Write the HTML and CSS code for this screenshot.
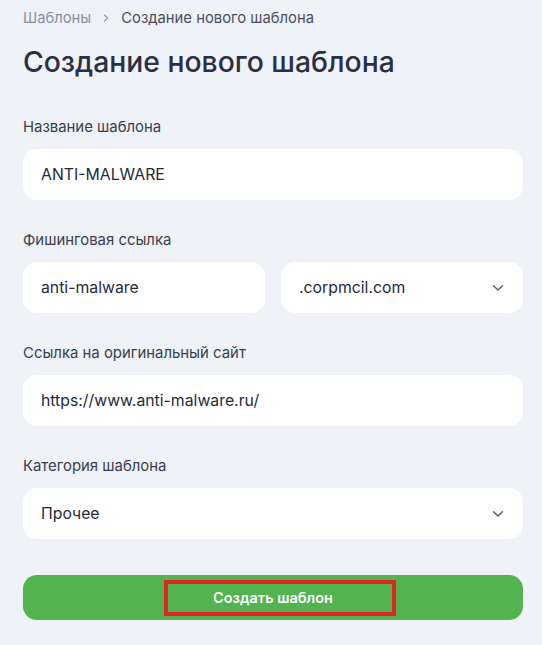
FILE: index.html
```html
<!DOCTYPE html>
<html lang="ru">
<head>
<meta charset="utf-8">
<title>Создание нового шаблона</title>
<link rel="stylesheet" href="styles.css">
</head>
<body>
<div class="page">
  <nav class="crumbs">
    <span class="crumb-link">Шаблоны</span>
    <svg class="crumb-sep" width="8" height="10" viewBox="0 0 8 10"><path d="M2.5 2 L5.5 5 L2.5 8" fill="none" stroke="#9aa0ae" stroke-width="1.3" stroke-linecap="round" stroke-linejoin="round"/></svg>
    <span class="crumb-current">Создание нового шаблона</span>
  </nav>
  <h1 class="title">Создание нового шаблона</h1>

  <form class="form">
    <div class="field">
      <div class="label">Название шаблона</div>
      <div class="input">ANTI-MALWARE</div>
    </div>
    <div class="field">
      <div class="label">Фишинговая ссылка</div>
      <div class="row">
        <div class="input">anti-malware</div>
        <div class="input select">.corpmcil.com
          <svg class="chev" width="12" height="8" viewBox="0 0 12 8"><path d="M1.5 1.8 L6 6 L10.5 1.8" fill="none" stroke="#555a6b" stroke-width="1.4" stroke-linecap="round" stroke-linejoin="round"/></svg>
        </div>
      </div>
    </div>
    <div class="field">
      <div class="label">Ссылка на оригинальный сайт</div>
      <div class="input">https://www.anti-malware.ru/</div>
    </div>
    <div class="field">
      <div class="label">Категория шаблона</div>
      <div class="input select">Прочее
        <svg class="chev" width="12" height="8" viewBox="0 0 12 8"><path d="M1.5 1.8 L6 6 L10.5 1.8" fill="none" stroke="#555a6b" stroke-width="1.4" stroke-linecap="round" stroke-linejoin="round"/></svg>
      </div>
    </div>
    <div class="button"><span class="button-text">Создать шаблон</span></div>
  </form>
</div>
</body>
</html>
```

FILE: styles.css
```css
html, body {
  margin: 0;
  padding: 0;
  background: #eff2f7;
}
body {
  font-family: Inter, "Noto Sans", sans-serif;
  color: #2f3345;
}
.page {
  padding: 8px 19px 0 23px;
}
.crumbs {
  display: flex;
  align-items: center;
  gap: 10px;
  height: 20px;
  font-size: 14.8px;
  line-height: 20px;
}
.crumb-link { color: #8b90a0; }
.crumb-sep { margin: 0 1px; }
.crumb-current { color: #4a4e5e; }
.title {
  margin: 14px 0 0;
  font-size: 28.3px;
  line-height: 40px;
  font-weight: 500;
  color: #2b2f44;
}
.form {
  margin-top: 35px;
  display: flex;
  flex-direction: column;
  gap: 30px;
}
.field {
  display: flex;
  flex-direction: column;
  gap: 12px;
}
.label {
  font-size: 14.9px;
  line-height: 20px;
  color: #3a3e4e;
}
.row {
  display: flex;
  gap: 16px;
}
.row .input { flex: 1; }
.input {
  height: 51px;
  box-sizing: border-box;
  background: #fff;
  border-radius: 14px;
  padding: 0 18px;
  display: flex;
  align-items: center;
  justify-content: space-between;
  font-size: 15.8px;
  color: #262a3a;
}
.chev { margin-right: 1px; }
.button {
  margin-top: 6px;
  height: 45px;
  background: #53b34f;
  border-radius: 14px;
  display: flex;
  align-items: center;
  justify-content: center;
}
.button-text {
  margin-left: 14px;
  padding: 0 59px 0 45px;
  height: 28px;
  border: 4px solid #e3232a;
  display: flex;
  align-items: center;
  color: #fff;
  font-weight: 600;
  font-size: 14.5px;
}
```
